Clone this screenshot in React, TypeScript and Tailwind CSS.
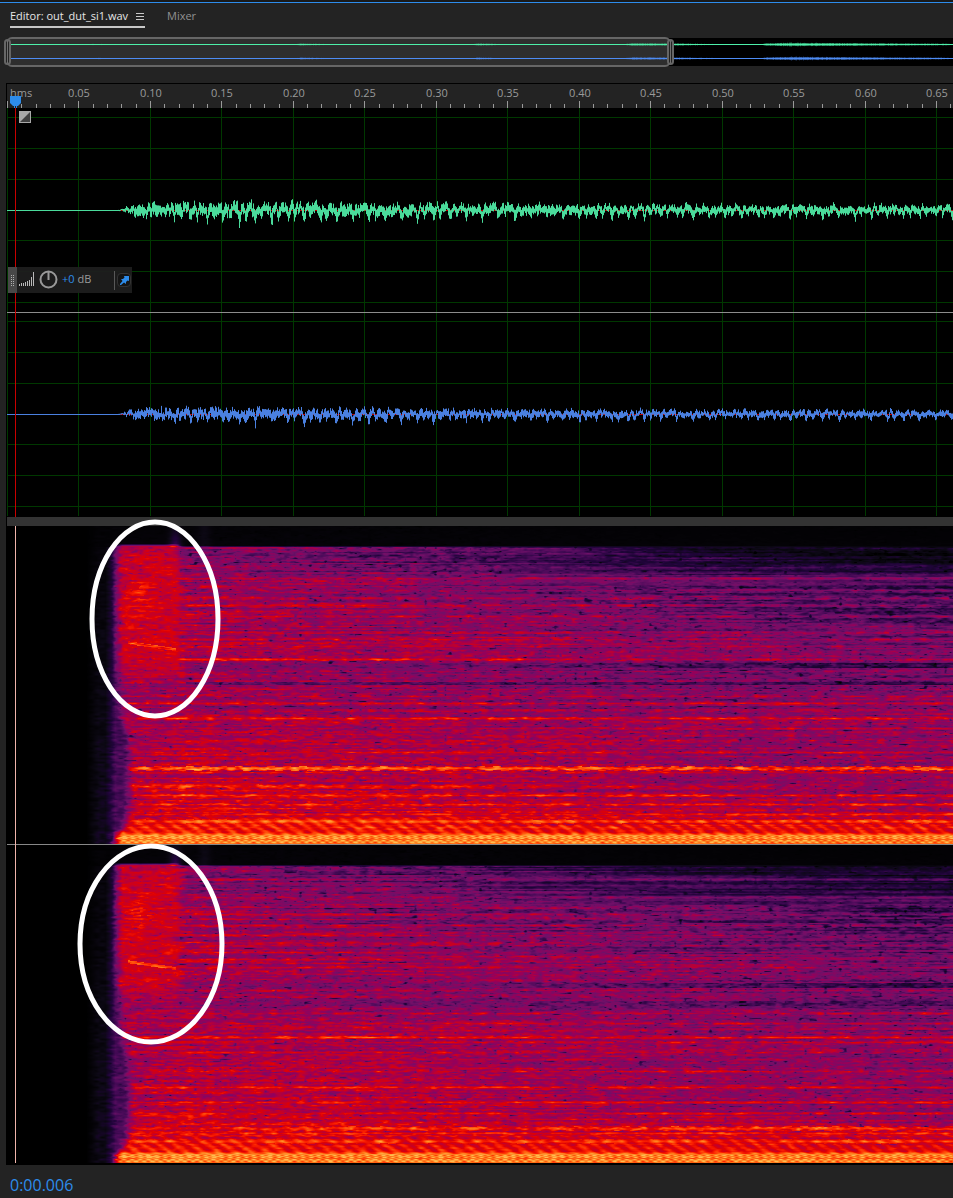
import { useLayoutEffect, useMemo, useRef, useState } from "react";

const START_X = 7; // time zero, px
const PX_PER_STEP = 71.46; // 0.05 s
const SPECTRUM_HEIGHT = 318;

type Point = [number, number];
// y, level on the left, level on the right, half width
type Band = [number, number, number, number];

interface IChannel {
  seed: number;
  bands: Band[];
  dark: Band[];
}

const PALETTE: [number, number, number, number][] = [
  [0, 0, 0, 0],
  [0.1, 12, 8, 20],
  [0.22, 32, 4, 58],
  [0.32, 72, 10, 88],
  [0.42, 112, 16, 104],
  [0.52, 150, 0, 90],
  [0.62, 190, 0, 48],
  [0.7, 222, 0, 4],
  [0.78, 252, 34, 0],
  [0.88, 255, 112, 20],
  [1, 255, 190, 80],
];

const LEFT_PROFILE: Point[] = [
  [0, 0.03], [19, 0.04], [21, 0.47], [50, 0.52], [90, 0.57], [110, 0.59], [132, 0.58],
  [138, 0.5], [165, 0.53], [180, 0.58], [240, 0.59], [262, 0.64], [285, 0.66], [300, 0.74],
  [306, 0.76], [309, 0.93], [318, 0.93],
];

const RIGHT_PROFILE: Point[] = [
  [0, 0.02], [19, 0.03], [21, 0.1], [40, 0.17], [55, 0.31], [90, 0.35], [115, 0.43], [135, 0.43],
  [160, 0.43], [180, 0.49], [200, 0.52], [238, 0.5], [262, 0.5], [280, 0.56], [290, 0.63],
  [306, 0.72], [309, 0.91], [318, 0.91],
];

const CHANNELS: IChannel[] = [
  {
    seed: 11,
    bands: [
      [52, 0.6, 0.5, 1], [64, 0.55, 0.44, 1], [72, 0.6, 0.48, 1], [79, 0.7, 0.46, 1],
      [90, 0.66, 0.48, 1], [106, 0.66, 0.52, 1], [113, 0.66, 0.54, 1], [120, 0.64, 0.52, 1],
      [133, 0.76, 0.56, 1], [163, 0.56, 0.5, 1], [170, 0.6, 0.56, 1], [177, 0.68, 0.62, 1],
      [192, 0.75, 0.68, 1], [202, 0.6, 0.62, 1], [214, 0.64, 0.58, 1], [226, 0.68, 0.62, 1],
      [242, 0.89, 0.82, 2], [246, 0.68, 0.66, 1], [260, 0.8, 0.54, 2], [269, 0.8, 0.7, 1],
      [278, 0.72, 0.74, 1], [288, 0.74, 0.74, 1], [295, 0.84, 0.81, 2], [301, 0.78, 0.76, 2],
    ],
    dark: [[139, 0.54, 0.25, 2], [157, 0.4, 0.28, 1], [181, 0.46, 0.44, 1]],
  },
  {
    seed: 47,
    bands: [
      [34, 0.58, 0.36, 1], [52, 0.6, 0.42, 1], [69, 0.66, 0.44, 1], [80, 0.64, 0.48, 1],
      [90, 0.64, 0.44, 1], [100, 0.6, 0.48, 1], [122, 0.66, 0.54, 1], [145, 0.62, 0.5, 1],
      [168, 0.62, 0.6, 1], [178, 0.64, 0.58, 1], [192, 0.77, 0.66, 1], [197, 0.62, 0.64, 1],
      [207, 0.68, 0.6, 1], [226, 0.66, 0.62, 1], [242, 0.75, 0.66, 1], [257, 0.72, 0.7, 1],
      [268, 0.7, 0.66, 1], [283, 0.79, 0.79, 2], [288, 0.74, 0.74, 1], [296, 0.83, 0.81, 2],
    ],
    dark: [[76, 0.5, 0.28, 1], [140, 0.54, 0.27, 2], [158, 0.48, 0.33, 2]],
  },
];

const hash = (x: number, y: number, seed: number) => {
  let h = Math.imul(x, 374761393) + Math.imul(y, 668265263) + Math.imul(seed, 974634777);
  h = Math.imul(h ^ (h >>> 13), 1274126177);
  return ((h ^ (h >>> 16)) >>> 0) / 4294967295;
};

const smooth = (t: number) => t * t * (3 - 2 * t);

const noise = (x: number, y: number, seed: number) => {
  const xi = Math.floor(x);
  const yi = Math.floor(y);
  const fx = smooth(x - xi);
  const fy = smooth(y - yi);
  const a = hash(xi, yi, seed) * (1 - fx) + hash(xi + 1, yi, seed) * fx;
  const b = hash(xi, yi + 1, seed) * (1 - fx) + hash(xi + 1, yi + 1, seed) * fx;
  return a * (1 - fy) + b * fy;
};

const clamp = (v: number) => Math.min(1, Math.max(0, v));

const curve = (points: Point[], at: number) => {
  for (let i = 1; i < points.length; i++) {
    if (at <= points[i][0]) {
      const [x0, y0] = points[i - 1];
      const [x1, y1] = points[i];
      return y0 + ((y1 - y0) * (at - x0)) / (x1 - x0);
    }
  }
  return points[points.length - 1][1];
};

const colorAt = (v: number) => {
  const i = Math.max(1, PALETTE.findIndex((p) => p[0] >= v));
  const a = PALETTE[i - 1];
  const b = PALETTE[i];
  const t = (v - a[0]) / (b[0] - a[0]);
  return [1, 2, 3].map((k) => a[k] + (b[k] - a[k]) * t);
};

const COLORS = Array.from({ length: 256 }, (_, i) => colorAt(i / 255));

const levelAt = (x: number, y: number, left: number, right: number, ch: IChannel) => {
  const { seed } = ch;
  // energy before the attack
  const edge =
    107 +
    curve([[0, 0], [130, 1], [190, 5], [215, 12], [280, 13], [300, 8], [306, 2], [318, -2]], y) +
    noise(x / 5, y / 2, seed) * 5;
  const glow = clamp((x - 86) / 12) * (y > 20 ? 0.05 + (y / 318) * 0.08 : 0.03);
  const rise = clamp((x - 105) / 10) * (y > 20 ? 0.22 : 0);
  const halo = glow * (0.4 + noise(x / 6, y / 2, seed + 31)) + rise;
  const attack = smooth(clamp((x - edge) / 13));
  const t = clamp((x - 180) / 720);

  let base = left + (right - left) * t;
  const rows = noise(x / 180, y * 0.73, seed + 3) - 0.5;
  base += y > 20 && y < 300 ? rows * (y < 120 ? 0.22 : 0.15) : 0;

  for (const [by, l, r, w] of ch.bands) {
    const d = Math.abs(y - by - (w > 1 ? Math.sin(x / 2.57) * 0.4 : 0));
    if (d <= w) {
      const pulse = (noise(x / 13, by, seed + 5) - 0.5) * 0.13;
      base = Math.max(base, l + (r - l) * t + pulse - (d / (w + 1)) * 0.14);
    }
  }
  for (const [by, l, r, w] of ch.dark) {
    if (Math.abs(y - by) <= w && x > 185) {
      base = Math.min(base, l + (r - l) * t);
    }
  }

  // wide burst right after the attack
  if (x < 194 && y > 17 && y < 165) {
    const end = 180 + noise(y / 6, 0, seed) * 8;
    const k = clamp((end - x) / 10) * clamp((160 - y) / 22) * clamp((y - 17) / 3);
    let burst = 0.61 + Math.min(0.04, Math.abs(y - 20) / 500);
    burst += (noise(x / 12, y / 3, seed + 13) - 0.5) * 0.08;
    const spot = Math.exp(-Math.pow((x - 140) / 13, 2) - Math.pow((y - 69) / 13, 2));
    burst += spot * 0.07 * (noise(x / 8, y / 1.5, seed + 17) > 0.45 ? 1.6 : 0);
    if (Math.abs(y - 118 - (x - 140) / 7) < 1.5 && x > 127 && x < 176) {
      burst += 0.06 + 0.14 * noise(x / 6, y, seed + 19);
    }
    base = base * (1 - k) + burst * k;
  }
  if (x < 192 && y >= 160 && y < 300) {
    base -= clamp((186 - x) / 30) * 0.03;
  }

  let grain = (noise(x / 7, y / 1.7, seed) - 0.5) * 0.2 + (noise(x / 3, y / 1.3, seed + 9) - 0.5) * 0.1;
  // sparse dark specks
  const speck = noise(x / 5, y / 1.8, seed + 21);
  if (speck > 0.8 && base < 0.66) grain -= (speck - 0.8) * 1.2;
  if (y <= 20) grain *= 0.1;
  if (y < 60 && x > 500) grain *= 0.6;
  if (x < 180 && y < 150) grain *= 0.75;
  if (y > 290 && y <= 308) {
    grain *= 0.5;
    grain += Math.sin(x / 2.57 - y * 0.6) * 0.06;
  }
  if (y > 308) {
    // woven harmonics
    grain *= 0.5;
    grain += Math.sin(x / 1.29 + (Math.floor((y - 308) / 3) % 2) * 2.4) * Math.cos((y - 310) * 1.6) * 0.08;
    if (y === 313 || y === 317) grain -= 0.05;
  }
  let v = base * attack + halo * (1 - attack) + grain * (attack + halo * (1 - attack));
  if (y <= 20) {
    v += Math.exp(-Math.pow((x - 175) / 6, 2)) * 0.24 * (0.3 + y / 28);
    v += Math.exp(-Math.pow((x - 204) / 6, 2)) * 0.06;
  }
  return clamp(v);
};

const useWidth = () => {
  const ref = useRef<HTMLDivElement>(null);
  const [width, setWidth] = useState(0);
  useLayoutEffect(() => {
    const update = () => setWidth(ref.current?.clientWidth ?? 0);
    update();
    window.addEventListener("resize", update);
    return () => window.removeEventListener("resize", update);
  }, []);
  return { ref, width };
};

const Spectrogram = ({ channel, width, label }: { channel: IChannel; width: number; label: string }) => {
  const canvasRef = useRef<HTMLCanvasElement>(null);

  useLayoutEffect(() => {
    const ctx = canvasRef.current?.getContext("2d");
    if (!ctx || !width) return;
    const image = ctx.createImageData(width, SPECTRUM_HEIGHT);
    for (let y = 0; y < SPECTRUM_HEIGHT; y++) {
      const left = curve(LEFT_PROFILE, y);
      const right = curve(RIGHT_PROFILE, y);
      for (let x = 0; x < width; x++) {
        const px = x + START_X;
        const color = px < 84 ? COLORS[0] : COLORS[Math.round(levelAt(px, y, left, right, channel) * 255)];
        const i = (y * width + x) * 4;
        image.data[i] = color[0];
        image.data[i + 1] = color[1];
        image.data[i + 2] = color[2];
        image.data[i + 3] = 255;
      }
    }
    ctx.putImageData(image, 0, 0);
  }, [channel, width]);

  return (
    <canvas
      ref={canvasRef}
      width={width}
      height={SPECTRUM_HEIGHT}
      role="img"
      aria-label={label}
      className="block h-[318px]"
    />
  );
};

const ENVELOPE: Point[] = [[118, 0.05], [126, 0.5], [138, 1.1], [260, 1.15], [400, 0.95], [600, 0.8], [950, 0.72]];

const wavePath = (width: number, seed: number, gain: number) => {
  let d = "";
  for (let x = 117; x < width + START_X; x++) {
    const env = curve(ENVELOPE, x) * gain;
    // one deep dip per 16 px, a shallower one between
    const phase = ((x - 120) % 16.2) / 16.2;
    const settled = clamp((x - 150) / 40);
    const dip =
      (Math.exp(-Math.pow((phase - 0.35) * 11, 2)) + Math.exp(-Math.pow((phase - 0.75) * 12, 2)) * 0.6) * settled;
    const mid = (0.5 - noise(x / 1.4, 0, seed)) * 6 * env - settled * 1.5 * env + dip * 6 * env;
    const up = mid - (1.5 + hash(x, 1, seed) * 5) * env;
    const down = mid + (1.5 + hash(x, 2, seed) * 5) * env + dip * 3 * env;
    d += `M${x - START_X + 0.5} ${up.toFixed(1)}V${Math.max(down, up + 1).toFixed(1)}`;
  }
  return d;
};

const Wave = ({ width, center, seed, gain, color }: {
  width: number;
  center: number;
  seed: number;
  gain: number;
  color: string;
}) => {
  const path = useMemo(() => wavePath(width, seed, gain), [width, seed, gain]);
  return (
    <g transform={`translate(0 ${center})`}>
      <path d={`M111 .5H${width}`} stroke="#c40000" />
      <path d="M0 .5H113" stroke={color} />
      <path d={path} stroke={color} />
    </g>
  );
};

const Waveforms = ({ width }: { width: number }) => {
  const columns = Array.from({ length: Math.ceil(width / PX_PER_STEP) }, (_, i) => Math.round(i * PX_PER_STEP));
  const rows = [9, 40, 71, 132, 163, 194, 213, 244, 275, 336, 367, 398];
  return (
    <svg width={width} height={409} role="img" aria-label="Waveform" className="block" fill="none">
      <g stroke="#003800" shapeRendering="crispEdges">
        {columns.map((x) => (
          <path key={x} d={`M${x + 0.5} 0V408`} />
        ))}
        {rows.map((y) => (
          <path key={y} d={`M0 ${y + 0.5}H${width}`} />
        ))}
      </g>
      <path d={`M0 204.5H${width}`} stroke="#8c8c8c" shapeRendering="crispEdges" />
      <Wave width={width} center={102} seed={5} gain={1} color="#4adb9b" />
      <Wave width={width} center={306} seed={8} gain={0.82} color="#4a80e0" />
      <path d="M8.5 0V409" stroke="#c80000" />
    </svg>
  );
};

const Ruler = ({ width }: { width: number }) => {
  const steps = Math.ceil(width / PX_PER_STEP);
  return (
    <svg width={width} height={24} className="block" role="img" aria-label="Time ruler">
      <g stroke="#9a9a9a" shapeRendering="crispEdges">
        {Array.from({ length: steps * 5 }, (_, i) => {
          const x = Math.round((i * PX_PER_STEP) / 5) + 0.5;
          return <path key={i} d={`M${x} 24V${i % 5 === 0 ? 17 : 20}`} />;
        })}
      </g>
      <g fill="#9a9a9a" className="text-[11px]">
        <text x={3} y={13}>hms</text>
        {Array.from({ length: Math.max(0, steps - 1) }, (_, i) => (
          <text key={i} x={Math.round((i + 1) * PX_PER_STEP) + 1} y={13} textAnchor="middle">
            {((i + 1) * 0.05).toFixed(2)}
          </text>
        ))}
      </g>
      <path d="M3 12H14V19L11 22H6L3 19Z" fill="#2d8ceb" />
      <path d="M7.500 21V24M9.500 21V24" stroke="#2d8ceb" />
    </svg>
  );
};

const LOUDNESS: Point[] = [
  [36, 0.2], [90, 0.5], [140, 0.2], [285, 0.1], [292, 0.8], [320, 0.4], [460, 0.1], [470, 0.8], [500, 0.3],
  [612, 0.1], [624, 1], [665, 0.9], [700, 0.5], [752, 0.1], [758, 1], [785, 1.6], [820, 1.3], [890, 0.9],
  [935, 0.7], [950, 0.3],
];

// the line thickens where the file gets louder
const overviewPath = (width: number, seed: number) => {
  let d = "";
  for (let x = 36; x < width; x++) {
    const h = curve(LOUDNESS, x) * (0.8 + hash(x, 0, seed) * 0.4);
    d += `M${x + 0.5} ${-h}V${h}`;
  }
  return d;
};

const Handle = ({ className }: { className: string }) => (
  <div
    className={`absolute top-px flex h-[26px] w-[7px] justify-center rounded-sm border-2 border-[#666] bg-[#222] ${className}`}
  >
    <span className="h-full w-px bg-[#707070]" />
  </div>
);

const Overview = () => {
  const { ref, width } = useWidth();
  return (
    <div ref={ref} className="relative ml-2 mt-[10px] h-7 bg-black">
      <div className="absolute -left-0.5 -top-px h-[30px] w-[665px] rounded-md border-2 border-[#666] bg-[#2e2e2e]" />
      <svg width={width} height={28} className="absolute inset-0" role="img" aria-label="File overview">
        <g transform="translate(0 6.5)" stroke="#4ef0aa">
          <path d={`M3 0H${width}`} />
          <path d={overviewPath(width, 2)} strokeOpacity={0.7} />
        </g>
        <g transform="translate(0 20.5)" stroke="#4e8cf4">
          <path d={`M3 0H${width}`} />
          <path d={overviewPath(width, 4)} strokeOpacity={0.7} />
        </g>
      </svg>
      <Handle className="-left-1" />
      <Handle className="left-[659px]" />
    </div>
  );
};

const GainHud = () => (
  <div className="absolute left-px top-[159px] flex h-[26px] w-[124px] items-center bg-[#1e1e1e]/95 text-[11px]">
    <div className="flex h-full w-[9px] items-center justify-center bg-[#484848]">
      <svg width="4" height="11" stroke="#b0b0b0" strokeDasharray="1 1">
        <path d="M.5 0V11M2.500 0V11" />
      </svg>
    </div>
    <svg width="16" height="15" stroke="#b8b8b8" className="mb-[3px] ml-0.5" shapeRendering="crispEdges">
      <path d="M.5 15V13M2.500 15V12M4.500 15V12M6.500 15V11M8.500 15V10M10.500 15V9M12.500 15V6M14.500 15V1" />
    </svg>
    <svg width="19" height="19" fill="none" stroke="#999" strokeWidth="2" className="mb-px ml-1">
      <circle cx="9.500" cy="9.500" r="8" />
      <path d="M9.500 2V10" />
    </svg>
    <span className="mb-0.5 ml-1 w-[52px] text-[#9a9a9a]">
      <span className="text-[#2d8ceb]">+0</span> dB
    </span>
    <span className="h-[19px] w-px bg-[#585858]" />
    <button
      type="button"
      aria-label="Pin HUD"
      className="ml-0.5 flex size-[14px] items-center justify-center rounded-sm border border-[#333] bg-[#151515]"
    >
      <svg width="9" height="9" viewBox="0 0 9 9" fill="#2d8ceb">
        <path d="M4 0H9V5L7.500 4.500L6 6V8L4 6.500L1 9H0V8L2.500 5L1 3H3L4.500 1.500Z" />
      </svg>
    </button>
  </div>
);

const App = () => {
  const { ref, width } = useWidth();

  return (
    <main className="flex min-h-screen flex-col overflow-hidden bg-[#232323] font-['Open_Sans',sans-serif] text-[#919191]">
      <div className="h-[3px] border-b border-[#2d8ceb] bg-[#1a1a1a]" />
      <nav className="flex h-[25px] items-stretch gap-[22px] pl-[10px] text-[11px]">
        <button
          type="button"
          className="flex w-[135px] items-center justify-between border-b-2 border-[#c8c8c8] pt-1 text-[#e6e6e6]"
        >
          <span className="whitespace-nowrap">Editor: out_dut_si1.wav</span>
          <svg width="9" height="9" stroke="#c8c8c8" shapeRendering="crispEdges">
            <path d="M0 1.500H8M0 4.500H8M0 7.500H8" />
          </svg>
        </button>
        <button type="button" className="border-b-2 border-transparent pt-1">Mixer</button>
      </nav>

      <Overview />

      <section className="relative ml-1.5 mt-[17px] border-l border-t border-black bg-black">
        <div ref={ref}>
          <div className="bg-[#232323]">
            <Ruler width={width} />
          </div>
          <div className="relative">
            <Waveforms width={width} />
            <button type="button" aria-label="Fade in" className="absolute left-3 top-[3px]">
              <svg width="12" height="12">
                <path d="M0 0H12V12H0Z" fill="#a8a8a8" />
                <path d="M11 1V11H1Z" fill="#404040" />
              </svg>
            </button>
            <GainHud />
          </div>
          <div className="h-[9px] bg-[#333]" />
          <div className="relative pb-0.5">
            <Spectrogram channel={CHANNELS[0]} width={width} label="Left channel spectrum" />
            <div className="h-px bg-[#888]" />
            <Spectrogram channel={CHANNELS[1]} width={width} label="Right channel spectrum" />
            <div className="absolute bottom-0.5 left-2 top-0 w-px bg-[#f0b4aa]" />
            <svg
              width="240"
              height="640"
              className="absolute left-0 top-0 overflow-visible"
              fill="none"
              stroke="#fff"
              strokeWidth="5"
              aria-hidden="true"
            >
              <ellipse cx="148" cy="93" rx="63" ry="97" />
              <ellipse cx="144" cy="418" rx="71" ry="98" />
            </svg>
          </div>
        </div>
      </section>

      <footer className="flex flex-1 items-center pl-[10px] pt-[6px] text-base text-[#2d8ceb]">
        <output>0:00.006</output>
      </footer>
    </main>
  );
};

export default App;
